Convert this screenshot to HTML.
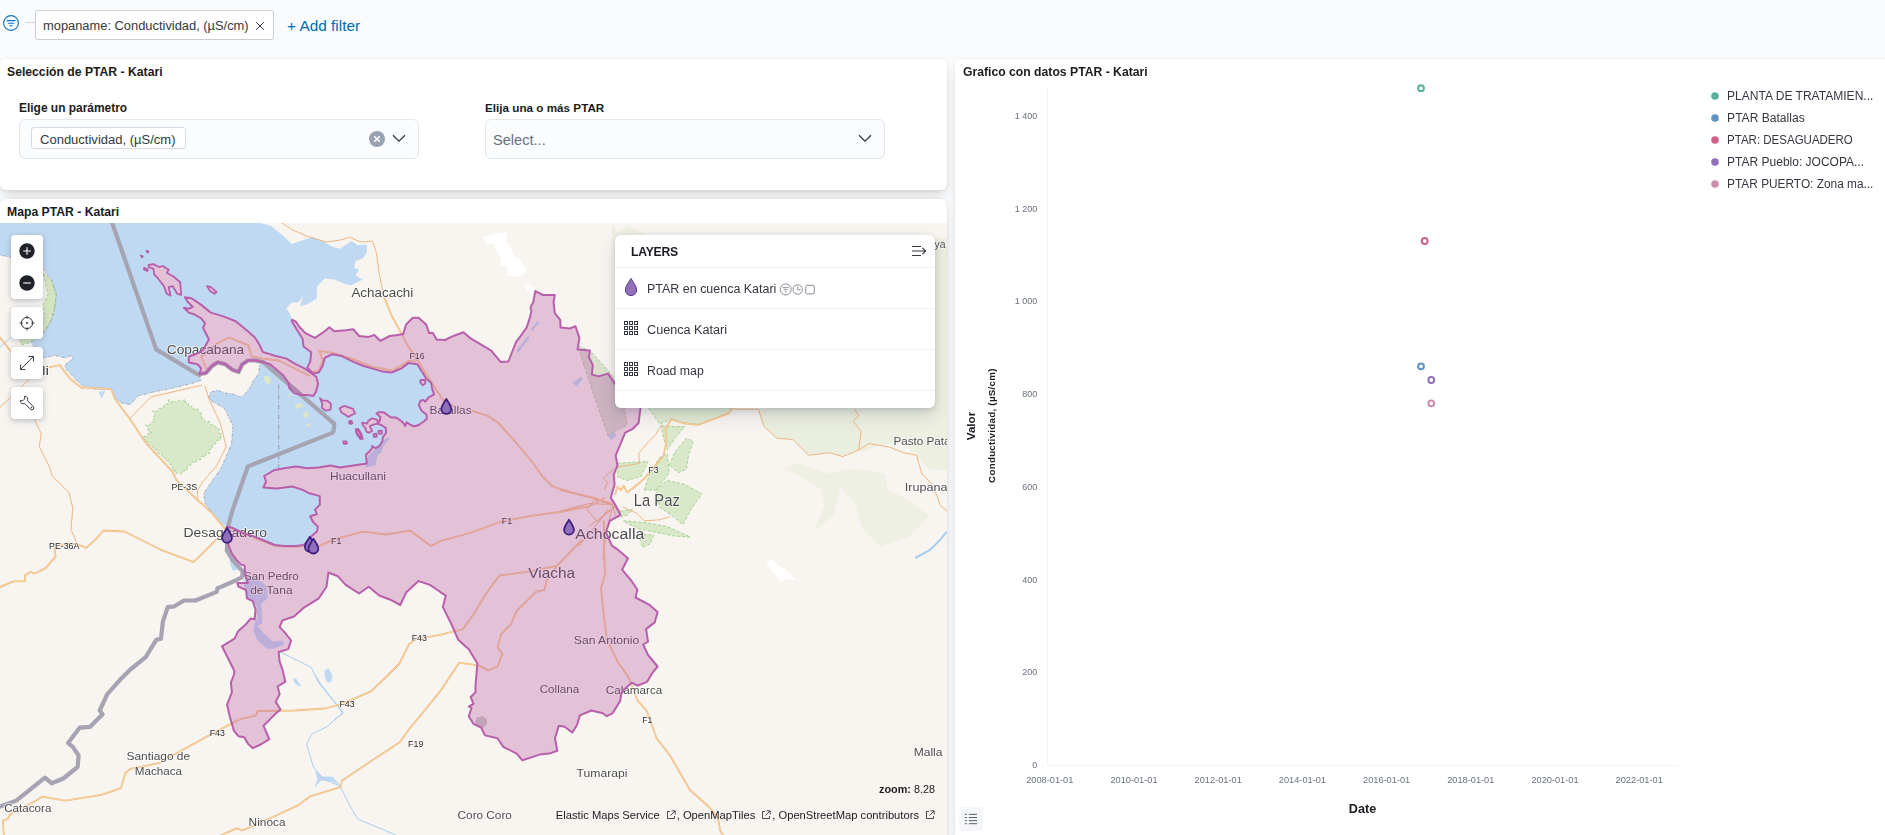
<!DOCTYPE html>
<html lang="es">
<head>
<meta charset="utf-8">
<title>Dashboard PTAR - Katari</title>
<style>
*{box-sizing:border-box;margin:0;padding:0}
html,body{width:1885px;height:835px;overflow:hidden;background:#fafbfd;font-family:"Liberation Sans",Arial,sans-serif;color:#343741}
.abs{position:absolute}
/* filter bar */
#fbar{position:absolute;left:0;top:0;width:1885px;height:56px}
#fpill{position:absolute;left:35px;top:10px;width:238.8px;height:30px;border:1px solid #c9cdd6;border-radius:3px;background:#fff;font-size:12.89px;line-height:30px;padding-left:7px;color:#343741;white-space:nowrap}
#addf{position:absolute;left:287px;top:17px;font-size:15.4px;color:#006bb4;white-space:nowrap;line-height:18px}
.panel{position:absolute;background:#fff;border-radius:6px;box-shadow:0 .9px 4px -1px rgba(0,0,0,.08),0 2.6px 8px -1px rgba(0,0,0,.06),0 5.7px 12px -1px rgba(0,0,0,.05),0 15px 15px -1px rgba(0,0,0,.04)}
.ptitle{position:absolute;left:7px;top:4px;font-size:12.2px;font-weight:bold;color:#1a1c21;white-space:nowrap;line-height:16px}
.flabel{position:absolute;font-size:12.4px;font-weight:bold;color:#1a1c21;white-space:nowrap;line-height:16px}
.field{position:absolute;width:400px;height:40px;background:#fbfcfd;border:1px solid #e3e6ef;border-radius:6px}
#map{position:absolute;left:0;top:24.5px;width:947px;height:612px;overflow:hidden;background:#f8f4f0}
.mbtn{position:absolute;left:11px;width:32px;background:#fff;border-radius:4px;box-shadow:0 1px 4px rgba(60,70,90,.25),0 3px 8px rgba(60,70,90,.12)}
#layers{position:absolute;left:615px;top:12px;width:320px;height:173px;background:#fff;border-radius:6px;box-shadow:0 2px 6px rgba(60,70,90,.2),0 8px 18px rgba(60,70,90,.15)}
#layers .row{position:absolute;left:0;width:320px;height:41px;border-top:1px solid #eef0f4}
#layers .row span{position:absolute;left:32px;top:13px;font-size:13.2px;color:#343741;line-height:16px;white-space:nowrap}
svg text{font-family:"Liberation Sans",Arial,sans-serif}
#lbl text,#shl text{font-family:"Liberation Sans",Arial,sans-serif}
</style>
</head>
<body>
<!-- FILTER BAR -->
<div id="fbar">
  <svg class="abs" style="left:2px;top:13.500px" width="18" height="18" viewBox="0 0 18 18"><circle cx="9" cy="9" r="7.4" fill="none" stroke="#0a72c4" stroke-width="1.1"/><path d="M5 6.6h8M6.3 9.2h5.4M7.8 11.8h2.4" stroke="#0a72c4" stroke-width="1.1" fill="none" stroke-linecap="round"/></svg>
  <div class="abs" style="left:25px;top:22px;width:10px;height:1px;background:#d3dae6"></div>
  <div id="fpill"><span id="fptxt">mopaname: Conductividad, (µS/cm)</span><svg class="abs" style="left:219.300px;top:10px" width="10" height="10" viewBox="0 0 10 10"><path d="M1.2 1.2l7.6 7.6M8.800 1.200l-7.600 7.600" stroke="#343741" stroke-width="1" fill="none"/></svg></div>
  <div id="addf">+ Add filter</div>
</div>

<!-- PANEL 1: controls -->
<div class="panel" style="left:0;top:58.7px;width:947px;height:131.6px">
  <div class="ptitle" style="left:7px;top:5.3px">Selección de PTAR - Katari</div>
  <div class="flabel" style="left:19px;top:41.3px;font-size:11.95px">Elige un parámetro</div>
  <div class="field" style="left:19px;top:60.3px">
    <div class="abs" style="left:11px;top:7px;width:155px;height:22px;border:1px solid #d3dae6;border-radius:3px;background:#fff;font-size:13.03px;line-height:24px;overflow:hidden;padding-left:8px;color:#343741;white-space:nowrap">Conductividad, (µS/cm)</div>
    <svg class="abs" style="left:349px;top:11px" width="16" height="16" viewBox="0 0 16 16"><circle cx="8" cy="8" r="8" fill="#98a2b3"/><path d="M5.2 5.2l5.6 5.6M10.8 5.2l-5.6 5.6" stroke="#fff" stroke-width="1.5" fill="none"/></svg>
    <svg class="abs" style="left:372px;top:14px" width="14" height="9" viewBox="0 0 14 9"><path d="M1 1.2l6 6 6-6" stroke="#343741" stroke-width="1.3" fill="none"/></svg>
  </div>
  <div class="flabel" style="left:485px;top:41.3px;font-size:11.7px">Elija una o más PTAR</div>
  <div class="field" style="left:485px;top:60.3px">
    <div class="abs" style="left:7px;top:11px;font-size:14.6px;color:#69707d;line-height:18px">Select...</div>
    <svg class="abs" style="left:372px;top:14px" width="14" height="9" viewBox="0 0 14 9"><path d="M1 1.2l6 6 6-6" stroke="#343741" stroke-width="1.3" fill="none"/></svg>
  </div>
</div>

<!-- PANEL 2: map -->
<div class="panel" style="left:0;top:198.5px;width:947px;height:646px;overflow:hidden">
  <div class="ptitle" style="left:7px;top:5.5px">Mapa PTAR - Katari</div>
  <div id="map" style="left:0">
    <svg id="mapsvg" class="abs" style="left:0;top:0" width="947" height="612" viewBox="0 223 947 612">
      <g fill="#e6ecd8" opacity=".75">
<path d="M611 223L618 232 628 226 640 232 655 238H947V470H930L912 452 905 440 880 446 861 452 850 438 820 440 800 410 770 408 700 408 660 408 640 404 628 392 622 370 618 300 614 250Z" opacity=".8"/>
<path d="M758.5 407.9 L854.7 407.9 L861.2 431.6 L858.6 450 L842.8 456.6 L829.6 452.7 L808.6 455.3 L792.8 439.5 L777 438.2 L763.8 426.3Z"/>
<path d="M783.5 468.5 L798 463.2 L829.6 473.7 L850.7 468.5 L884.9 473.7 L887.6 489.5 L903.4 497.5 L929.7 515.9 L908.6 537 L879.7 546.2 L871.8 537 L861.2 526.4 L856 505.4 L840.2 486.9 L833.6 515.9 L813.8 530.4 L824.4 505.4 L821.7 489.5 L800.7 476.4Z" opacity=".7"/>
</g>
<g fill="#ffffff">
<path d="M483.5 236.5 L495 233.6 L506.5 232.7 L506.5 243.2 L510.4 246.1 L514.2 255.7 L521.9 261.4 L526.6 271 L519.9 276.8 L507.5 275.8 L506.5 266.2 L499.8 265.3 L500.8 257.6 L495 248 L494.1 244.2 L485.4 243.2Z"/>
<path d="M523.8 284.4 L531.4 284.4 L535.3 291.1 L531.4 294 L526.6 290.2Z"/>
<path d="M766.4 562 L771.7 559.3 L779.6 565.9 L787.5 571.2 L796.7 580.4 L787.5 579.1 L780.9 581.7 L774.3 573.8 L770.4 569.9Z"/>
</g>
<path d="M0 222 L259.4 222 L259.4 222.9 L270.9 225.8 L282.4 235.3 L292 244 L305.4 239.2 L313.1 237.3 L322.7 241.1 L332.3 246.8 L339.9 248.8 L351.4 241.1 L357.2 244.9 L366.8 244.9 L366.8 252.6 L362.9 258.3 L355.3 261.2 L354.3 267.9 L359.1 269.8 L355.3 275.6 L362.9 279.4 L351.4 285.2 L345.7 284.2 L334.2 279.4 L324.6 278.5 L316.9 287.1 L316.9 298.6 L307.3 304.3 L299.7 306.3 L303.5 295.7 L297.8 302.4 L292 302.4 L286.3 308.2 L290.1 313.9 L292 319.7 L292 321.6 L297.8 331.2 L302.6 338.8 L303.5 346.5 L311.2 352.3 L310.2 361.9 L307.3 367.6 L313.1 373.4 L318.8 372.4 L322.7 365.7 L324.6 358 L332.3 354.2 L341.9 356.1 L353.4 361.9 L362.9 365.7 L372.5 368.6 L382.1 371.4 L391.5 372.5 L401.1 368.6 L408.8 362.9 L417.4 364.2 L421.2 370.5 L426 378.2 L431.2 382.9 L432.1 388.6 L434.1 394.4 L428.3 397.7 L425.4 401.6 L423.5 400.1 L420.6 400.6 L418.7 404.9 L421.6 410.7 L426.4 414.5 L426.9 418.8 L423.5 421.7 L418.7 425 L413.9 426.5 L410.1 424.6 L406.7 422.2 L405.3 426 L403.4 423.1 L399.6 419.8 L395.7 417.4 L390.9 417.4 L388.1 415.5 L384.2 412.6 L379.4 412.1 L376.5 413.5 L380.4 416.9 L379.9 420.7 L377.5 423.6 L381.3 425 L385.7 427.9 L386.1 432.7 L382.8 437.5 L382.3 441.3 L379.4 446.1 L375.6 448.1 L372.2 446.1 L372.2 448.1 L368.9 451.9 L366 454.8 L366.8 463.5 L353.4 465.5 L339.9 467.4 L330.4 465.5 L318.8 467.4 L307.3 468.3 L295.8 466.4 L284.3 468.3 L273.8 470.3 L264.2 476 L266.1 481.8 L263.3 487.5 L276.7 488.5 L292 486.5 L301.6 489.4 L309.3 493.3 L319.8 496.1 L319.8 504.8 L315 509.6 L316.9 514.3 L310.2 516.3 L313.1 522 L317.9 526.8 L316.9 531.6 L311.2 536.4 L310.2 539.3 L303.5 545 L295.8 546 L284.3 546 L274.8 545 L263.3 540.2 L253.7 536.4 L244.1 533.5 L232.6 527.8 L226.8 526.8 L219.2 522 L211.5 512.4 L204.8 502.8 L203.8 493.3 L211.5 481.8 L221.1 468.3 L226.8 454.9 L231.6 443.4 L232.6 430 L232.9 425.6 L224.3 408.3 L210.9 400.7 L208.9 397.9 L210.8 392.1 L217.5 390.2 L225.2 393.1 L232.8 394.1 L240.5 396.9 L244.3 395 L250.1 387.3 L253.9 379.7 L258.7 373.9 L259.7 364.3 L263.5 362.4 L270.2 364.3 L276.9 370.1 L283.6 375.8 L288.4 382.6 L289.4 388.3 L294.2 393.1 L300.9 395 L307.6 395 L313.4 396 L316.2 391.2 L318.1 383.5 L316.2 376.8 L305.7 369.1 L294.2 363.4 L286.5 358.6 L275 355.7 L262.6 351.9 L259.7 345.2 L254.9 337.5 L247.2 330.8 L235.7 321.2 L223.3 316.4 L210.8 312.6 L201.2 304.9 L191.6 298.2 L184.9 297.3 L187.8 302 L192.6 306.8 L188.8 308.8 L184 307.8 L188.8 312.6 L194.5 314.5 L201.2 318.3 L205 323.1 L203.1 327.9 L206 333.7 L208.9 339.4 L203.1 350 L196.4 353.8 L188.8 356.7 L188.8 362.4 L197.4 364.3 L201.2 368.2 L199.3 374.3 L201.3 380.5 L191.7 383.4 L172.5 388.2 L153.4 392 L138 395.9 L130.4 404.5 L122.7 403.5 L115 398.8 L111.2 389.2 L95.8 389.2 L84.3 387.3 L76.7 380.5 L67.1 370 L64.7 366.3 L67.1 362.7 L73.1 359.1 L71.9 355.5 L64.7 357.9 L55.1 355.5 L43.1 357.9 L35.9 349.6 L31.1 342.4 L45.5 330.4 L51.5 319.6 L55.1 306.4 L56.3 294.5 L51.5 280.1 L43.1 269.3 L10.8 257.3 L0 254.9 L0 222Z" fill="#bfd9f2"/>
<g fill="#f8f4f0">
<path d="M148.6 265 L153.4 264.1 L159.1 267 L162.9 266 L168.7 269.8 L166.8 272.7 L173.5 276.5 L180.2 282.3 L181.2 294.8 L177.3 293.8 L172.5 286.1 L168.7 287.1 L170.6 295.7 L166.8 293.8 L163.9 286.1 L157.2 277.5 L154.3 274.6 L153.4 268.9 L148.6 267Z"/>
<path d="M207 286.1 L210.9 287.1 L216.6 291.9 L214.7 293.8 L209.9 290.9Z"/>
<path d="M140.9 255.5 L142.8 256.4 L141.9 257.4Z"/>
<path d="M146.6 250.7 L148.6 251.6 L147.2 252.6Z"/>
<path d="M144.2 267.9 L148 269.5 L147.2 271 L143.8 269.1Z"/>
<path d="M320 398.2 L322.9 400.6 L327.2 400.6 L331 404 L330.5 409.7 L325.8 410.7 L321.9 407.8 L322.4 404Z"/>
<path d="M339.6 408.3 L344.4 405.9 L353.1 408.8 L355 413.5 L351.6 415 L348.3 416.9 L344.9 414.5 L341.6 412.6Z"/>
<path d="M349.5 421.2 L351.6 421 L352.4 423.1 L350.5 423.9Z"/>
<path d="M355.9 429.4 L358.3 428.9 L361.2 433.7 L362.7 438.9 L360.3 437.5 L356.9 433.2Z"/>
<path d="M343.2 441.3 L346.4 441.3 L347 443.3 L344 444Z"/>
<path d="M373.5 434.2 L376.5 433.7 L376.7 436.5 L373.9 437Z"/>
<path d="M378.5 430.8 L381.8 430.6 L382.1 433.5 L378.9 433.7Z"/>
<path d="M420.6 380 L425.4 380 L425 383.8 L422.6 385.3 L420.2 382.4Z"/>
<path d="M362.2 422.7 L367 423.6 L368.4 420.7 L372.2 418.3 L377.5 419.8 L377.5 423.6 L373.7 424.6 L369.8 426 L372.2 430.8 L369.4 432.7 L366.5 431.8 L365 427.4 L362.7 425Z"/>
<path d="M349.8 420.9 L351.7 421.9 L350.7 423.8 L348.8 422.8Z"/>
<path d="M355.9 429.1 L359.4 431.4 L362.2 438.1 L360.3 439.1 L356.5 433.4Z"/>
</g>
<g fill="#bfd9f2">
<path d="M324.6 670.2 L328.4 668.3 L332.3 675 L331.3 681.7 L327.5 682.7 L324.6 676.9Z"/>
<path d="M293 678.8 L295.8 677.9 L301.6 686.5 L297.8 685.6 L294.9 683.6Z"/>
<path d="M315.3 770.8 L322.9 776.6 L332.5 776.6 L340.2 785.2 L332.5 781.4 L321 780.4 L314.3 788.1 L317.2 779.5Z"/>
<path d="M98.7 392 L105.4 391.1 L101.6 398.8Z"/>
<path d="M229.1 556.4 L232.9 558.3 L237.7 569.8 L232.9 570.8 L230 564.1Z"/>
</g>
<g fill="none" stroke="#a8cdf0" stroke-width="1">
<path d="M280.5 652 L311.2 667.3 L318.8 682.7 L334.2 701.9 L342.8 713.4 L334.2 720.1"/>
<path d="M315.3 675 L321 684.6 L343.1 712.4 L326.8 726.8 L311.4 734.4 L306.6 744 L313.4 767 L322.9 778.5 L340.2 786.2 L349.8 805.4 L357.4 818.8 L395.8 835.1"/>
<path d="M915.2 558 L929.7 550.1 L940.3 539.6 L946.8 531.7" stroke-width="2"/>
<path d="M0 347 L10 338 22 330" />
</g>
<g fill="#dde9c4">
<path d="M263.5 376.8 L268.3 375.8 L271.2 381.6 L267.3 384.5 L264.5 380.6Z"/>
<path d="M294.2 404.6 L301.9 402.7 L302.8 406.5 L297.1 408.8Z"/>
<path d="M302.8 413.2 L307.6 411.3 L308.6 416.1 L304.7 418Z"/>
<path d="M305.7 424.7 L311.1 422.8 L309.5 427.2Z"/>
<path d="M287.5 393.1 L291.3 395 L289.4 396.9Z"/>
</g>
<g fill="#bfd9f2">
<path d="M243.1 574.4 L257.5 578.2 L267.1 586.8 L267.5 598.3 L261.3 604.1 L262.3 623.3 L257.5 626.1 L263.3 632.8 L272.8 641.5 L282.4 640.5 L284 644.3 L274.8 648.6 L267.1 649.1 L257.5 640.5 L253.3 630.9 L254.6 623.3 L257.5 617.5 L256.5 606 L251.8 600.3 L247 596.4 L244.1 586.8Z"/>
<path d="M572.7 383 L580.3 376.9 L583.2 378.2 L576.5 386.8Z"/>
<path d="M608.1 435.7 L614.8 431.9 L616.2 435.7 L611 440.5Z"/>
<path d="M530.5 329.5 L538.1 320.8 L539.1 323.1 L532.4 330.8Z"/>
<path d="M516.1 350.6 L528.6 335.2 L529.5 338.1 L518 353.1Z"/>
<path d="M383.3 440.4 L388.5 437 L390 438.5 L386.1 442.3 L383.3 446.1 L381.3 452.8 L377.5 454.8 L373.7 460 L369.8 460 L372.2 452.8 L377.5 449 L381.3 445.2Z"/>
<path d="M368.7 454.9 L384 439.6 L389.8 437.7 L378.3 453 L375.4 465.5 L364.9 467.4Z"/>
<path d="M607.9 435.5 L613.7 432.2 L616 434.9 L611.4 440.3Z"/>
</g>
<path d="M143.4 436.2 L146.7 436.5 L148.4 433.5 L152.1 432.8 L148.4 431.6 L148 427.9 L145.4 424.9 L149.3 425.2 L151.7 422.1 L155.9 421.7 L152.9 418.9 L154.8 415.3 L152.8 410.7 L156.9 411.6 L159.2 408.3 L163.3 408.6 L163.7 404.9 L167.6 403.8 L169 399.4 L171 402.2 L174.2 400.6 L176.6 403.1 L178.4 400.2 L181.8 401.4 L184.9 399.1 L185.2 402.2 L188.5 403.2 L188.5 407.1 L192.1 406.2 L193.7 409.7 L197.4 408.6 L198.5 411.6 L201.7 413.6 L201.1 417.3 L203.8 418.7 L205.4 422.2 L209.4 421.4 L211 424.9 L214.4 425.2 L216.1 427.8 L219.4 429.1 L218.4 432.6 L221.5 434.1 L221 436.6 L220.1 440 L216.6 440.4 L215.7 443.7 L212.1 444.4 L212.7 448 L209.3 449.4 L209.7 453.6 L206 453.1 L205.2 456.9 L201.4 456.1 L200.5 459.8 L197.2 459.6 L195.6 462.8 L191.9 461.7 L191.2 464.9 L187.2 466 L187.1 469.9 L183.9 471 L181.9 473.8 L178.7 472.1 L175.5 474 L175.4 470.8 L172.1 469.6 L173 465.7 L170 464.5 L169.3 461.3 L165.9 460.9 L165.2 457.8 L162.1 457 L161.7 453.7 L157.9 453.6 L157.5 450.2 L154.5 449.8 L152.7 446.3 L148.3 445.7 L148.1 441.8 L144.4 440.7Z" fill="#d8e8c8" stroke="#9ccf8a" stroke-width=".9" stroke-dasharray="3 2"/>
<path d="M43.1 272.9 L51.5 280.1 L56.3 294.5 L55.1 306.4 L51.5 319.6 L45.5 330.4 L31.1 342.4 L21.6 344.8 L19.2 337.6 L35.9 328 L44.3 316 L43.1 304 L47.9 294.5Z" fill="#d4e3c0" stroke="#9ccf8a" stroke-width=".9" stroke-dasharray="3 2"/>
<path d="M617.5 463.3 L648.2 461.3 L644.3 469 L640.5 476.7 L627.1 480.5 L617.5 476.7Z" fill="#d8e8c8" stroke="#9ccf8a" stroke-width=".9" stroke-dasharray="3 2"/>
<path d="M661.6 425.9 L684.6 426.8 L675 438.3 L667.3 449.8 L663.5 438.3Z" fill="#d8e8c8" stroke="#9ccf8a" stroke-width=".9" stroke-dasharray="3 2"/>
<path d="M669.3 465.2 L675 451.8 L686.5 438.3 L693.2 441.2 L688.4 455.6 L686.5 469 L678.8 472.8Z" fill="#d8e8c8" stroke="#9ccf8a" stroke-width=".9" stroke-dasharray="3 2"/>
<path d="M644.3 490.1 L650.1 472.8 L659.7 457.5 L667.3 453.7 L669.3 472.8 L655.8 490.1Z" fill="#d8e8c8" stroke="#9ccf8a" stroke-width=".9" stroke-dasharray="3 2"/>
<path d="M655.8 490.1 L667.3 480.5 L684.6 484.3 L701.9 493.9 L692.3 507.3 L682.7 524.6 L671.2 515 L659.7 507.3Z" fill="#d8e8c8" stroke="#9ccf8a" stroke-width=".9" stroke-dasharray="3 2"/>
<path d="M623.3 520.8 L646.3 522.7 L667.3 526.5 L690.4 537.1 L675 536.1 L655.8 532.3 L636.7 528.4Z" fill="#d8e8c8" stroke="#9ccf8a" stroke-width=".9" stroke-dasharray="3 2"/>
<path d="M638.6 534.2 L653.9 535.1 L650.1 543.8 L642.4 547.6Z" fill="#d8e8c8" stroke="#9ccf8a" stroke-width=".9" stroke-dasharray="3 2"/>
<path d="M620.4 511.2 L632.8 509.3 L627.1 515 L621.3 516.9Z" fill="#d8e8c8" stroke="#9ccf8a" stroke-width=".9" stroke-dasharray="3 2"/>
<path d="M648.2 407.7 L732.5 407.7 L728.7 413.4 L713.4 419.2 L698 424.9 L682.7 423 L671.2 419.2 L659.7 424Z" fill="#dfe9d2" stroke="#9ccf8a" stroke-width=".9" stroke-dasharray="3 2"/>
<path d="M578.4 345.8 L590.9 351.5 L606 368 L620 385 L623.3 400 L627.1 424.9 L607.9 435.5 L595.5 400 L582.2 360Z" fill="#dadfce" stroke="#9fc090" stroke-width=".8" stroke-dasharray="3 2"/>
<circle cx="481.2" cy="722" r="5.5" fill="#cfc8c4" stroke="#a8c898" stroke-width=".8" stroke-dasharray="3 2"/>
<path d="M201.3 380.5 L191.7 383.4 L172.5 388.2 L153.4 392 L138 395.9 L130.4 404.5 L122.7 403.5 L115 398.8 L111.2 389.2 L95.8 389.2 L84.3 387.3 L76.7 380.5 L67.1 370 L64.7 366.3 L67.1 362.7 L73.1 359.1 L71.9 355.5 L64.7 357.9 L55.1 355.5 L43.1 357.9 L35.9 349.6 L31.1 342.4 L45.5 330.4 L51.5 319.6 L55.1 306.4 L56.3 294.5 L51.5 280.1 L43.1 269.3 L10.8 257.3 L0 254.9" fill="none" stroke="#8e8e9e" stroke-width=".9" stroke-dasharray="3 1.5 1 1.5" opacity=".75"/>
<path d="M219.2 522 L211.5 512.4 L204.8 502.8 L203.8 493.3 L211.5 481.8 L221.1 468.3 L226.8 454.9 L231.6 443.4 L232.6 430 L232.9 425.6 L224.3 408.3 L210.9 400.7 L208.9 397.9 L210.8 392.1 L217.5 390.2 L225.2 393.1 L232.8 394.1 L240.5 396.9 L244.3 395 L250.1 387.3 L253.9 379.7 L258.7 373.9 L259.7 364.3" fill="none" stroke="#8e8e9e" stroke-width=".9" stroke-dasharray="3 1.5 1 1.5" opacity=".75"/>
<path d="M278.8 384.5V470" stroke="#9a97a8" stroke-width="1" stroke-dasharray="5 2 1 2" fill="none"/>
<g fill="none" stroke-linejoin="round" stroke-linecap="round">
<path d="M281.5 222.9 L292 229.6 L307.3 236.3 L326.5 242 L339.9 240.1 L349.5 237.3 L361 242 L372.5 241.1 L376.4 252.6 L379.2 273.7 L384 296.7" stroke="#eeb582" stroke-width="1"/>
<path d="M130.4 417.9 L151.4 396.8 L201.3 385.3" stroke="#eeb582" stroke-width="1"/>
<path d="M205.1 386.3 L208.9 398.8 L220.4 423.7 L226.2 446.7 L216.6 465.8 L203.2 481.2 L197.4 490.8 L197.4 500.4" stroke="#eeb582" stroke-width="1"/>
<path d="M28.8 379.6 L23 385.3 L0 407.4" stroke="#eeb582" stroke-width="1"/>
<path d="M34.5 419.8 L41.2 433.3 L39.3 446.7 L49.8 467.8 L51.8 475.4 L69 492.7 L72.8 508 L70.9 530.1 L71.9 531.5 L76.7 543" stroke="#eeb582" stroke-width="1"/>
<path d="M733.5 409.2 L758.5 409.2 L763.8 426.3 L777 438.2 L792.8 439.5 L808.6 455.3 L829.6 452.7 L842.8 456.6 L858.6 450 L861.2 431.6 L853.3 421.1 L858.6 415.8 L854.7 409.2" stroke="#eeb582" stroke-width="1"/>
<path d="M858.6 450 L869.1 443.5 L890.2 447.4 L903.4 452.7 L916.6 455.3 L921.8 473.7 L932.4 484.3 L937.6 497.5 L940.3 505.4 L946.8 510.6" stroke="#eeb582" stroke-width="1"/>
<path d="M639.6 463.3 L638.6 453.7 L646.3 444.1 L655.8 434.5 L661.6 424.9" stroke="#eeb582" stroke-width="1"/>
<path d="M617.5 467.1 L639.6 463.3" stroke="#eeb582" stroke-width="1"/>
<path d="M623.3 507.3 L636.7 513.1 L644.3 520.8 L659.7 519.8 L669.3 516.9" stroke="#eeb582" stroke-width="1"/>
<path d="M560 490.1 L590.7 497.8 L611.8 504.5 L615.6 515" stroke="#eeb582" stroke-width="1"/>
<path d="M560 511.2 L588.8 503.5 L611.8 504.5" stroke="#eeb582" stroke-width="1"/>
<path d="M586.8 509.3 L594.5 499.7 L611.8 504.5" stroke="#eeb582" stroke-width="1"/>
<path d="M586.8 509.3 L598.3 522.7 L607.9 509.3" stroke="#eeb582" stroke-width="1"/>
<path d="M579.2 545.7 L606 513.1 L613.7 507.3" stroke="#eeb582" stroke-width="1"/>
<path d="M588.8 526.5 L609.8 511.2" stroke="#eeb582" stroke-width="1"/>
<path d="M603.1 560.1 L606 532.3 L611.8 509.3" stroke="#eeb582" stroke-width="1"/>
<path d="M604.1 490.1 L607.9 482.4 L603.1 478.6 L613.7 469" stroke="#eeb582" stroke-width="1"/>
<path d="M0 337.6 L9.6 349.6 L26.3 368.7 L43.1 368.7 L59.9 365.1 L69.5 378.3 L81.4 387.9 L84.3 387.3 L111.2 389.2 L115 398.8 L130.4 419.8 L145.7 442.8 L172.5 471.6 L176.4 480.2 L191.7 494.6 L210.9 511.9 L226.2 530.1" stroke="#eeb47a" stroke-width="1.8"/>
<path d="M0 587.1 L13.4 581.3 L24.9 581.3 L24.9 575.6 L30.7 571.8 L34.5 573.7 L46 567.9 L55.6 556.4 L54.6 548.8 L59.4 544.9 L76.7 544 L86.3 547.8 L95.8 539.2 L103.5 530.5 L124.6 531.5 L162.9 550.7 L193.6 562.2 L214.7 541.1 L226.2 529.6" stroke="#eeb47a" stroke-width="1.8"/>
<path d="M3.8 835.1 L2.9 820.7 L7.7 818.8 L11.5 813 L34.5 801.5 L42.2 796.7 L65.2 800.6 L101.6 794.8 L120.8 788.1 L125.6 772.8 L130.4 768.9 L159.1 763.2 L172.5 755.5 L210.9 734.4 L240 719.1 L236.7 720 L255.8 715.3 L257.8 711 L294.2 710.5 L324.9 708.5 L342.1 703.8 L370.9 691.3 L388.1 675 L399.4 663.5 L408.9 644.3 L416.6 638.6 L430 636.7 L440 634.8 L440 634.9" stroke="#eeb47a" stroke-width="1.8"/>
<path d="M221.3 835.1 L236.7 828.4 L242.4 830.3 L271.2 817.8 L298 805.4 L309.5 796.7 L340.2 787.1 L342.1 780.4 L370.9 761.3 L400 742.1 L410 728 L425 710 L440 691.4" stroke="#eeb47a" stroke-width="1.8"/>
<path d="M384 296.7 L391.7 315.8 L401.3 333.1 L407 344.6 L416.6 358 L424.3 371.4 L430 380.1 L426 373.4 L435.6 388.8 L443.3 400.3 L456.7 407.9 L472 410.8 L487.3 415.6 L498.8 423.3 L514.2 440.5 L533.4 463.5 L542.9 476.9 L552.5 486.5 L571.7 492.3 L590.9 497.1 L610 502.8 L620 511.4" stroke="#eeb47a" stroke-width="1.8"/>
<path d="M226.8 527.8 L244.1 534.5 L263.3 541.2 L274.8 546 L295.8 546.9 L311.2 545 L318.8 546 L334.2 539.3 L362.9 531.6 L385.9 534.5 L409.9 530.6 L431 546 L440 541.2 L470 533 L500 522 L530 516 L560 512 L590 506 L604 498" stroke="#eeb47a" stroke-width="1.8"/>
<path d="M603.9 520.8 L603.9 540 L604.9 574.5 L601 587.9 L603.9 616.7 L606.8 639.7 L618.3 662.7 L627.9 676.1 L631.7 685.7 L637.4 700.1 L647 711.4 L656.6 738.3 L670 755.5 L680 772.8 L690 790 L708 806 L718 818 L720 830 L726 840" stroke="#eeb47a" stroke-width="1.8"/>
<path d="M581.9 540 L556.9 565.9 L546.4 581.2 L544.5 589.8 L535.8 591.8 L524.3 603.3 L516.7 610.9 L510.9 624.3 L501.3 633.9 L497.5 647.3 L502.3 654.1 L497.5 666.5 L487.9 670.4 L479.3 665.6 L459.2 662.7 L440 691.4" stroke="#eeb47a" stroke-width="1.8"/>
<path d="M556.9 565.9 L528.2 571.6 L499.4 575.5 L486 593.7 L474.5 612.8 L463 629.1 L440 634.9" stroke="#eeb47a" stroke-width="1.8"/>
<path d="M615.2 494.3 L617.5 486.6 L621 490.1 L623.6 485.5 L627.1 492.4 L632.8 488.2 L644.3 478.6 L655.8 465.2 L663.5 455.6 L666.4 442.2 L665.4 428.8 L671.2 419.2 L682.7 423 L698 424.9 L713.4 419.2 L728.7 413.4 L732.5 407.7" stroke="#eeb47a" stroke-width="1.8"/>
<path d="M201.2 356.7 L206 368.2 L201.2 356.7 L217.5 343.3 L229 337.5 L238.6 341.3 L248.2 345.2 L252 356.7 L263.5 358.6 L278.8 360.5 L294.2 368.2 L309.5 375.8" stroke="#eeb47a" stroke-width="1.8"/>
<path d="M313.4 372 L319.1 370.1 L322.9 360.5 L319.1 350.9 L332.5 352.8 L351.7 358.6 L370.9 366.3 L390 370.1 L400 369.1 L391.5 370.5 L401.1 365.8 L408.8 361 L418.3 360" stroke="#eeb47a" stroke-width="1.8"/>
<path d="M0 337.6 L9.6 349.6 L26.3 368.7 L43.1 368.7 L59.9 365.1 L69.5 378.3 L81.4 387.9 L84.3 387.3 L111.2 389.2 L115 398.8 L130.4 419.8 L145.7 442.8 L172.5 471.6 L176.4 480.2 L191.7 494.6 L210.9 511.9 L226.2 530.1" stroke="#fdebb8" stroke-width="0.6"/>
<path d="M0 587.1 L13.4 581.3 L24.9 581.3 L24.9 575.6 L30.7 571.8 L34.5 573.7 L46 567.9 L55.6 556.4 L54.6 548.8 L59.4 544.9 L76.7 544 L86.3 547.8 L95.8 539.2 L103.5 530.5 L124.6 531.5 L162.9 550.7 L193.6 562.2 L214.7 541.1 L226.2 529.6" stroke="#fdebb8" stroke-width="0.6"/>
<path d="M3.8 835.1 L2.9 820.7 L7.7 818.8 L11.5 813 L34.5 801.5 L42.2 796.7 L65.2 800.6 L101.6 794.8 L120.8 788.1 L125.6 772.8 L130.4 768.9 L159.1 763.2 L172.5 755.5 L210.9 734.4 L240 719.1 L236.7 720 L255.8 715.3 L257.8 711 L294.2 710.5 L324.9 708.5 L342.1 703.8 L370.9 691.3 L388.1 675 L399.4 663.5 L408.9 644.3 L416.6 638.6 L430 636.7 L440 634.8 L440 634.9" stroke="#fdebb8" stroke-width="0.6"/>
<path d="M221.3 835.1 L236.7 828.4 L242.4 830.3 L271.2 817.8 L298 805.4 L309.5 796.7 L340.2 787.1 L342.1 780.4 L370.9 761.3 L400 742.1 L410 728 L425 710 L440 691.4" stroke="#fdebb8" stroke-width="0.6"/>
<path d="M384 296.7 L391.7 315.8 L401.3 333.1 L407 344.6 L416.6 358 L424.3 371.4 L430 380.1 L426 373.4 L435.6 388.8 L443.3 400.3 L456.7 407.9 L472 410.8 L487.3 415.6 L498.8 423.3 L514.2 440.5 L533.4 463.5 L542.9 476.9 L552.5 486.5 L571.7 492.3 L590.9 497.1 L610 502.8 L620 511.4" stroke="#fdebb8" stroke-width="0.6"/>
<path d="M226.8 527.8 L244.1 534.5 L263.3 541.2 L274.8 546 L295.8 546.9 L311.2 545 L318.8 546 L334.2 539.3 L362.9 531.6 L385.9 534.5 L409.9 530.6 L431 546 L440 541.2 L470 533 L500 522 L530 516 L560 512 L590 506 L604 498" stroke="#fdebb8" stroke-width="0.6"/>
<path d="M603.9 520.8 L603.9 540 L604.9 574.5 L601 587.9 L603.9 616.7 L606.8 639.7 L618.3 662.7 L627.9 676.1 L631.7 685.7 L637.4 700.1 L647 711.4 L656.6 738.3 L670 755.5 L680 772.8 L690 790 L708 806 L718 818 L720 830 L726 840" stroke="#fdebb8" stroke-width="0.6"/>
<path d="M581.9 540 L556.9 565.9 L546.4 581.2 L544.5 589.8 L535.8 591.8 L524.3 603.3 L516.7 610.9 L510.9 624.3 L501.3 633.9 L497.5 647.3 L502.3 654.1 L497.5 666.5 L487.9 670.4 L479.3 665.6 L459.2 662.7 L440 691.4" stroke="#fdebb8" stroke-width="0.6"/>
<path d="M556.9 565.9 L528.2 571.6 L499.4 575.5 L486 593.7 L474.5 612.8 L463 629.1 L440 634.9" stroke="#fdebb8" stroke-width="0.6"/>
<path d="M615.2 494.3 L617.5 486.6 L621 490.1 L623.6 485.5 L627.1 492.4 L632.8 488.2 L644.3 478.6 L655.8 465.2 L663.5 455.6 L666.4 442.2 L665.4 428.8 L671.2 419.2 L682.7 423 L698 424.9 L713.4 419.2 L728.7 413.4 L732.5 407.7" stroke="#fdebb8" stroke-width="0.6"/>
<path d="M201.2 356.7 L206 368.2 L201.2 356.7 L217.5 343.3 L229 337.5 L238.6 341.3 L248.2 345.2 L252 356.7 L263.5 358.6 L278.8 360.5 L294.2 368.2 L309.5 375.8" stroke="#fdebb8" stroke-width="0.6"/>
<path d="M313.4 372 L319.1 370.1 L322.9 360.5 L319.1 350.9 L332.5 352.8 L351.7 358.6 L370.9 366.3 L390 370.1 L400 369.1 L391.5 370.5 L401.1 365.8 L408.8 361 L418.3 360" stroke="#fdebb8" stroke-width="0.6"/>
</g>
<path d="M111.5 221 L156.2 349.4 L199.3 375.3 L199.3 374.3 L206 373 L211.8 366.3 L217.5 362.4 L225.2 364.3 L232.8 370.1 L238.6 372 L242.4 364.3 L248.2 360.5 L255.8 360.5 L263.5 362.4 L334.4 423.8 L333.5 431.4 L332.3 432.9 L247.9 466.4 L232.6 510 L227.8 527.3 L227.3 542.6 L226.8 550.3 L232.6 559.9 L238.4 566.6 L242.7 571.4 L242.2 577.1 L234.5 581 L219.2 587.7 L217.6 588.1 L216.6 591.9 L195.5 600.5 L184 600.5 L174.4 606.3 L167.7 607.2 L162.9 621.6 L161 638.8 L156.2 639.8 L145.7 657.1 L130.4 669.5 L119.8 680.1 L107.3 694.2 L99.7 710.5 L102.6 714.3 L90.1 726.8 L79.6 727.7 L68.1 743.1 L72.8 746.9 L78.6 755.5 L77.6 767 L63.3 778.5 L51.8 783.3 L45 777.6 L16.3 800.6 L-1.9 807.3" fill="none" stroke="#a6a3b2" stroke-width="4.2" stroke-linejoin="round"/>
<g id="lbl" font-family="'DejaVu Sans','Liberation Sans',sans-serif" fill="#4a4a4a" stroke="#fff" stroke-opacity=".85" stroke-width="1.6" paint-order="stroke" text-anchor="start">
<text x="351.4" y="296.7" font-size="13.4" textLength="61.9" lengthAdjust="spacingAndGlyphs">Achacachi</text>
<text x="166.8" y="353.5" font-size="13.4" textLength="77.4" lengthAdjust="spacingAndGlyphs">Copacabana</text>
<text x="429.5" y="413.7" font-size="10.8" textLength="42.1" lengthAdjust="spacingAndGlyphs">Batallas</text>
<text x="330" y="479.8" font-size="10.8" textLength="56" lengthAdjust="spacingAndGlyphs">Huacullani</text>
<text x="633.8" y="506.4" font-size="17.4" textLength="46" lengthAdjust="spacingAndGlyphs">La Paz</text>
<text x="575.3" y="539" font-size="15.4" textLength="69" lengthAdjust="spacingAndGlyphs">Achocalla</text>
<text x="183.6" y="536.9" font-size="13.4" textLength="83.4" lengthAdjust="spacingAndGlyphs">Desaguadero</text>
<text x="528.2" y="578.3" font-size="15" textLength="46.9" lengthAdjust="spacingAndGlyphs">Viacha</text>
<text x="244" y="579.5" font-size="10.8" textLength="54.7" lengthAdjust="spacingAndGlyphs">San Pedro</text>
<text x="250.2" y="593.5" font-size="10.8" textLength="42.4" lengthAdjust="spacingAndGlyphs">de Tana</text>
<text x="573.8" y="643.5" font-size="10.8" textLength="65.5" lengthAdjust="spacingAndGlyphs">San Antonio</text>
<text x="539.7" y="693.3" font-size="10.8" textLength="39.6" lengthAdjust="spacingAndGlyphs">Collana</text>
<text x="605.8" y="693.8" font-size="10.8" textLength="56.5" lengthAdjust="spacingAndGlyphs">Calamarca</text>
<text x="576.5" y="776.6" font-size="10.8" textLength="51" lengthAdjust="spacingAndGlyphs">Tumarapi</text>
<text x="457.6" y="818.8" font-size="10.8" textLength="54.3" lengthAdjust="spacingAndGlyphs">Coro Coro</text>
<text x="248.6" y="825.5" font-size="10.8" textLength="36.9" lengthAdjust="spacingAndGlyphs">Ninoca</text>
<text x="126.5" y="760.3" font-size="10.8" textLength="63.6" lengthAdjust="spacingAndGlyphs">Santiago de</text>
<text x="134.8" y="774.7" font-size="10.8" textLength="47.3" lengthAdjust="spacingAndGlyphs">Machaca</text>
<text x="4.2" y="811.5" font-size="10.8" textLength="47.2" lengthAdjust="spacingAndGlyphs">Catacora</text>
<text x="913.7" y="755.7" font-size="10.8" textLength="28.8" lengthAdjust="spacingAndGlyphs">Malla</text>
<text x="893.4" y="444.8" font-size="10.8" textLength="57.2" lengthAdjust="spacingAndGlyphs">Pasto Pata</text>
<text x="904.7" y="490.9" font-size="10.8" textLength="42.8" lengthAdjust="spacingAndGlyphs">Irupana</text>
<text x="25.5" y="374.7" font-size="13.4" textLength="23.6" lengthAdjust="spacingAndGlyphs">Juli</text>
<text x="934.5" y="248" font-size="10.8" textLength="11" lengthAdjust="spacingAndGlyphs">ya</text>
</g>
<g font-family="'DejaVu Sans','Liberation Sans',sans-serif" font-size="8.8" fill="#262626" stroke="#fff" stroke-opacity=".75" stroke-width="1.2" paint-order="stroke" text-anchor="middle">
<text x="417" y="359.3">F16</text>
<text x="184.3" y="490">PE-3S</text>
<text x="64.2" y="548.8">PE-36A</text>
<text x="336.2" y="543.8">F1</text>
<text x="507" y="523.5">F1</text>
<text x="653.5" y="472.7">F3</text>
<text x="419.3" y="641">F43</text>
<text x="347" y="707.4">F43</text>
<text x="217.3" y="736">F43</text>
<text x="415.7" y="746.5">F19</text>
<text x="647.3" y="723">F1</text>
</g>
<g fill="#b250a3" fill-opacity=".3" stroke="#b85fac" stroke-width="2" stroke-linejoin="round">
<path d="M292 319.7 L295.8 321.6 L299.7 327.3 L305.4 333.1 L315 337.9 L324.6 331.2 L329.4 327.3 L334.2 331.2 L345.7 330.2 L353.4 329.3 L359.1 336 L368.7 336.9 L374.4 335 L380.2 340.8 L389.8 336 L397.4 335 L403.2 334.1 L406.1 324.5 L412.8 317.8 L418.5 317.8 L426.2 324.5 L429.1 333.1 L432.9 333.1 L436.7 339.8 L440 339.8 L445.2 340 L452.8 336.2 L463.4 332.3 L470.1 338.1 L481.6 344.8 L491.2 350.6 L500.8 362.1 L508.4 361.5 L512.3 351.5 L516.1 341.9 L521.9 334.3 L526.6 327.6 L529.5 318.9 L531.4 311.3 L530.5 307.4 L533.4 301.7 L535.3 291.1 L542.9 295 L554.8 295 L553.5 301.7 L554.8 313.2 L560.2 319.9 L560.6 327.6 L569.8 328.5 L575.5 326.2 L579.4 338.1 L577.4 349.6 L589.9 350.6 L588.9 357.3 L592.8 364.9 L591.8 374.5 L598.5 376.4 L608.1 373.6 L615.8 385.1 L620 390.7 L628 395 L636 401 L641 405 L640.5 407.7 L638.6 423 L632.8 428.8 L625.2 432.6 L621.3 442.2 L615.6 455.6 L617.5 465.2 L613.7 474.8 L614.6 484.3 L610.8 497.8 L615.6 505.4 L620.4 515 L609.8 520.8 L606 532.3 L611.8 545.7 L616.4 548.6 L627.9 558.2 L622.1 569.7 L631.7 581.2 L637.4 589.8 L635.5 597.5 L649.9 605.2 L657.6 611.9 L654.7 622.4 L646.1 629.1 L648 641.6 L643.2 644.5 L648 655 L657.6 666.5 L652.8 672.3 L647 681.9 L637.4 685.7 L631.7 682.7 L624 689.4 L621.2 694.2 L620.2 700.9 L612.5 713.3 L606.8 716.2 L602.9 713.3 L591.4 710.5 L579.9 715.3 L577.1 724.8 L572.3 732.5 L564.6 726.8 L558.8 725.8 L555 738.3 L557.3 750.7 L549.3 753.6 L539.7 754.6 L522.4 760.3 L516.7 753.6 L503.3 746.9 L497.5 738.3 L485 735.4 L481.2 727.7 L473.5 723.9 L468.8 716.2 L471.6 707.6 L468.8 706.6 L473.5 703.8 L470.7 697 L475.5 692.3 L475.5 685.7 L477.4 663.6 L468.8 649.3 L458.2 639.7 L451.5 624.3 L442.9 607.1 L445.8 595.6 L440 591.8 L430 584.9 L418.5 581.1 L406.1 592.6 L400.3 605 L391.7 600.3 L379.2 595.5 L368.7 586.8 L359.1 593.5 L345.7 584.9 L338 576.3 L328.4 572.5 L326.5 586.8 L318.8 598.3 L303.5 607.9 L293.9 616.5 L282.4 620.4 L279.6 627.1 L284.3 631.9 L291.1 640.5 L288.2 649.1 L278.6 652 L279.6 661.6 L282.4 669.3 L285.3 681.7 L277.6 686.5 L279.6 694.2 L275.7 701.9 L280.5 709.5 L276 713.3 L270.2 719.1 L263.5 725.8 L266.4 732.5 L269.3 739.2 L261.6 744 L253 748.2 L248.2 744 L244.3 737.3 L238.6 736.3 L233.8 730.6 L230 717.2 L227.1 704.7 L231.9 692.3 L230.9 682.7 L233.8 675 L234.5 671.2 L228.8 659.7 L222 646.3 L234.5 638.6 L238.3 630.9 L246 624.2 L250.8 618.5 L254.6 619.4 L255.6 609.8 L252.7 601.2 L247 598.3 L246 590 L238.4 586.7 L237.4 582.9 L247.9 582.9 L245.1 575.2 L244.6 565.6 L241.2 564.6 L236.4 559.9 L231.6 553.1 L227.8 543.6 L226.8 526.8 L232.6 527.8 L244.1 533.5 L253.7 536.4 L263.3 540.2 L274.8 545 L284.3 546 L295.8 546 L303.5 545 L310.2 539.3 L311.2 536.4 L316.9 531.6 L317.9 526.8 L313.1 522 L310.2 516.3 L316.9 514.3 L315 509.6 L319.8 504.8 L319.8 496.1 L309.3 493.3 L301.6 489.4 L292 486.5 L276.7 488.5 L263.3 487.5 L266.1 481.8 L264.2 476 L273.8 470.3 L284.3 468.3 L295.8 466.4 L307.3 468.3 L318.8 467.4 L330.4 465.5 L339.9 467.4 L353.4 465.5 L366.8 463.5 L366 454.8 L368.9 451.9 L372.2 448.1 L372.2 446.1 L375.6 448.1 L379.4 446.1 L382.3 441.3 L382.8 437.5 L386.1 432.7 L385.7 427.9 L381.3 425 L377.5 423.6 L379.9 420.7 L380.4 416.9 L376.5 413.5 L379.4 412.1 L384.2 412.6 L388.1 415.5 L390.9 417.4 L395.7 417.4 L399.6 419.8 L403.4 423.1 L405.3 426 L406.7 422.2 L410.1 424.6 L413.9 426.5 L418.7 425 L423.5 421.7 L426.9 418.8 L426.4 414.5 L421.6 410.7 L418.7 404.9 L420.6 400.6 L423.5 400.1 L425.4 401.6 L428.3 397.7 L434.1 394.4 L432.1 388.6 L431.2 382.9 L426 378.2 L421.2 370.5 L417.4 364.2 L408.8 362.9 L401.1 368.6 L391.5 372.5 L382.1 371.4 L372.5 368.6 L362.9 365.7 L353.4 361.9 L341.9 356.1 L332.3 354.2 L324.6 358 L322.7 365.7 L318.8 372.4 L313.1 373.4 L307.3 367.6 L310.2 361.9 L311.2 352.3 L303.5 346.5 L302.6 338.8 L297.8 331.2 L292 321.6Z"/>
<path d="M184.9 297.3 L191.6 298.2 L201.2 304.9 L210.8 312.6 L223.3 316.4 L235.7 321.2 L247.2 330.8 L254.9 337.5 L259.7 345.2 L262.6 351.9 L275 355.7 L286.5 358.6 L294.2 363.4 L305.7 369.1 L316.2 376.8 L318.1 383.5 L316.2 391.2 L313.4 396 L307.6 395 L300.9 395 L294.2 393.1 L289.4 388.3 L288.4 382.6 L283.6 375.8 L276.9 370.1 L270.2 364.3 L263.5 362.4 L255.8 360.5 L248.2 360.5 L242.4 364.3 L238.6 372 L232.8 370.1 L225.2 364.3 L217.5 362.4 L211.8 366.3 L206 373 L199.3 374.3 L201.2 368.2 L197.4 364.3 L188.8 362.4 L188.8 356.7 L196.4 353.8 L203.1 350 L208.9 339.4 L206 333.7 L203.1 327.9 L205 323.1 L201.2 318.3 L194.5 314.5 L188.8 312.6 L184 307.8 L188.8 308.8 L192.6 306.8 L187.8 302Z"/>
<path d="M148.6 265 L153.4 264.1 L159.1 267 L162.9 266 L168.7 269.8 L166.8 272.7 L173.5 276.5 L180.2 282.3 L181.2 294.8 L177.3 293.8 L172.5 286.1 L168.7 287.1 L170.6 295.7 L166.8 293.8 L163.9 286.1 L157.2 277.5 L154.3 274.6 L153.4 268.9 L148.6 267Z" stroke-width="1.8"/>
<path d="M207 286.1 L210.9 287.1 L216.6 291.9 L214.7 293.8 L209.9 290.9Z" stroke-width="1.8"/>
<path d="M140.9 255.5 L142.8 256.4 L141.9 257.4Z" stroke-width="1.8"/>
<path d="M146.6 250.7 L148.6 251.6 L147.2 252.6Z" stroke-width="1.8"/>
<path d="M144.2 267.9 L148 269.5 L147.2 271 L143.8 269.1Z" stroke-width="1.8"/>
<path d="M320 398.2 L322.9 400.6 L327.2 400.6 L331 404 L330.5 409.7 L325.8 410.7 L321.9 407.8 L322.4 404Z" stroke-width="1.8"/>
<path d="M339.6 408.3 L344.4 405.9 L353.1 408.8 L355 413.5 L351.6 415 L348.3 416.9 L344.9 414.5 L341.6 412.6Z" stroke-width="1.8"/>
<path d="M349.5 421.2 L351.6 421 L352.4 423.1 L350.5 423.9Z" stroke-width="1.8"/>
<path d="M355.9 429.4 L358.3 428.9 L361.2 433.7 L362.7 438.9 L360.3 437.5 L356.9 433.2Z" stroke-width="1.8"/>
<path d="M343.2 441.3 L346.4 441.3 L347 443.3 L344 444Z" stroke-width="1.8"/>
<path d="M373.5 434.2 L376.5 433.7 L376.7 436.5 L373.9 437Z" stroke-width="1.8"/>
<path d="M378.5 430.8 L381.8 430.6 L382.1 433.5 L378.9 433.7Z" stroke-width="1.8"/>
<path d="M420.6 380 L425.4 380 L425 383.8 L422.6 385.3 L420.2 382.4Z" stroke-width="1.8"/>
<path d="M362.2 422.7 L367 423.6 L368.4 420.7 L372.2 418.3 L377.5 419.8 L377.5 423.6 L373.7 424.6 L369.8 426 L372.2 430.8 L369.4 432.7 L366.5 431.8 L365 427.4 L362.7 425Z" stroke-width="1.8"/>
<path d="M349.8 420.9 L351.7 421.9 L350.7 423.8 L348.8 422.8Z" stroke-width="1.8"/>
<path d="M355.9 429.1 L359.4 431.4 L362.2 438.1 L360.3 439.1 L356.5 433.4Z" stroke-width="1.8"/>
</g>
<path transform="translate(446.3 406.6) scale(1)" d="M0 -7.6 C1.3 -5 4.900 -1.200 4.900 2.600 A4.900 4.700 0 0 1 -4.900 2.600 C-4.900 -1.200 -1.300 -5 0 -7.600Z" fill="#8f6fba" stroke="#3d1f80" stroke-width="1.8" stroke-linejoin="round"/>
<path transform="translate(569 527.3) scale(1)" d="M0 -7.6 C1.3 -5 4.900 -1.200 4.900 2.600 A4.900 4.700 0 0 1 -4.900 2.600 C-4.900 -1.200 -1.300 -5 0 -7.600Z" fill="#8f6fba" stroke="#3d1f80" stroke-width="1.8" stroke-linejoin="round"/>
<path transform="translate(227 535.5) scale(1)" d="M0 -7.6 C1.3 -5 4.900 -1.200 4.900 2.600 A4.900 4.700 0 0 1 -4.900 2.600 C-4.900 -1.200 -1.300 -5 0 -7.600Z" fill="#8f6fba" stroke="#3d1f80" stroke-width="1.8" stroke-linejoin="round"/>
<path transform="translate(309.8 544.4) scale(1)" d="M0 -7.6 C1.3 -5 4.900 -1.200 4.900 2.600 A4.900 4.700 0 0 1 -4.900 2.600 C-4.900 -1.200 -1.300 -5 0 -7.600Z" fill="#8f6fba" stroke="#3d1f80" stroke-width="1.8" stroke-linejoin="round"/>
<path transform="translate(313.4 546.2) scale(1)" d="M0 -7.6 C1.3 -5 4.900 -1.200 4.900 2.600 A4.900 4.700 0 0 1 -4.900 2.600 C-4.900 -1.200 -1.300 -5 0 -7.600Z" fill="#8f6fba" stroke="#3d1f80" stroke-width="1.8" stroke-linejoin="round"/>
    </svg>
    <div class="mbtn" style="top:12px;height:64px">
      <svg class="abs" style="left:8px;top:8px" width="16" height="16" viewBox="0 0 16 16"><circle cx="8" cy="8" r="7.7" fill="#1f222b"/><path d="M8 4.2v7.6M4.2 8h7.6" stroke="#fff" stroke-width="1.1" fill="none"/></svg>
      <svg class="abs" style="left:8px;top:40px" width="16" height="16" viewBox="0 0 16 16"><circle cx="8" cy="8" r="7.7" fill="#1f222b"/><path d="M4.2 8h7.6" stroke="#fff" stroke-width="1.1" fill="none"/></svg>
    </div>
    <div class="mbtn" style="top:84px;height:32px"><svg class="abs" style="left:8px;top:8px" width="16" height="16" viewBox="0 0 16 16"><circle cx="8" cy="8" r="5.6" fill="none" stroke="#343741" stroke-width="1"/><path d="M8 .5v3.2M8 12.3v3.2M.5 8h3.2M12.3 8h3.2" stroke="#343741" stroke-width="1" fill="none"/><circle cx="8" cy="8" r="1" fill="#343741"/></svg></div>
    <div class="mbtn" style="top:124px;height:32px"><svg class="abs" style="left:8px;top:8px" width="16" height="16" viewBox="0 0 16 16"><path d="M1.5 14.5L14.5 1.5M9.5 1.5h5v5M1.5 9.500v5h5" stroke="#343741" stroke-width=".95" fill="none"/></svg></div>
    <div class="mbtn" style="top:164px;height:32px"><svg class="abs" style="left:8px;top:8px" width="16" height="16" viewBox="0 0 16 16"><path d="M5.810 1.030L5.700 3.900 3.900 5.700 1.030 5.810A3.900 3.900 0 0 0 5.760 8.580L11.490 14.310A2 2 0 0 0 14.310 11.490L8.580 5.760A3.900 3.900 0 0 0 5.810 1.030Z" stroke="#343741" stroke-width="1" fill="none" stroke-linejoin="round"/><circle cx="12.600" cy="12.600" r=".8" fill="#343741"/></svg></div>
    <div id="layers">
      <div class="abs" style="left:16px;top:9px;font-size:12.2px;font-weight:bold;color:#1a1c21;line-height:16px;letter-spacing:-.25px">LAYERS</div>
      <svg class="abs" style="left:296px;top:10px" width="16" height="12" viewBox="0 0 16 12"><path d="M1 1.5h9M1 6h13.6M1 10.500h9M11.400 2.800L14.600 6l-3.200 3.200" stroke="#343741" stroke-width="1.1" fill="none"/></svg>
      <div class="row" style="top:32px"><svg class="abs" style="left:9px;top:9px" width="14" height="20" viewBox="-7 -10 14 20"><path d="M0 -8.6C1.500 -5.500 5.600 -1.400 5.600 3A5.600 5.600 0 0 1 -5.600 3C-5.600 -1.400 -1.500 -5.500 0 -8.600Z" fill="#9170b8" stroke="#5a3a8e" stroke-width="1"/></svg><span id="lt1" style="font-size:12.47px">PTAR en cuenca Katari</span>
        <svg class="abs" style="left:164px;top:15px" width="40" height="13" viewBox="0 0 40 13"><g fill="none" stroke="#69707d" stroke-width=".8"><circle cx="6.700" cy="6.500" r="5.500"/><path d="M3.700 4.700h6M4.900 6.700h3.600M6 8.700h1.400"/><circle cx="18.700" cy="6.500" r="4.700"/><path d="M18.700 3.500v3.200h2.800"/><rect x="26.700" y="2.300" width="8.600" height="8.600" rx="1.600"/></g></svg></div>
      <div class="row" style="top:73px"><svg class="abs" style="left:9px;top:12px" width="14" height="14" viewBox="0 0 14 14"><g fill="none" stroke="#343741" stroke-width="1"><rect x=".5" y=".5" width="3" height="3"/><rect x="5.500" y=".5" width="3" height="3"/><rect x="10.500" y=".5" width="3" height="3"/><rect x=".5" y="5.500" width="3" height="3"/><rect x="5.500" y="5.500" width="3" height="3"/><rect x="10.500" y="5.500" width="3" height="3"/><rect x=".5" y="10.500" width="3" height="3"/><rect x="5.500" y="10.500" width="3" height="3"/><rect x="10.500" y="10.500" width="3" height="3"/></g></svg><span style="font-size:12.65px">Cuenca Katari</span></div>
      <div class="row" style="top:114px"><svg class="abs" style="left:9px;top:12px" width="14" height="14" viewBox="0 0 14 14"><g fill="none" stroke="#343741" stroke-width="1"><rect x=".5" y=".5" width="3" height="3"/><rect x="5.500" y=".5" width="3" height="3"/><rect x="10.500" y=".5" width="3" height="3"/><rect x=".5" y="5.500" width="3" height="3"/><rect x="5.500" y="5.500" width="3" height="3"/><rect x="10.500" y="5.500" width="3" height="3"/><rect x=".5" y="10.500" width="3" height="3"/><rect x="5.500" y="10.500" width="3" height="3"/><rect x="10.500" y="10.500" width="3" height="3"/></g></svg><span style="font-size:12.3px">Road map</span></div>
      <div class="row" style="top:155px;height:1px"></div>
    </div>
    <div class="abs" id="zoomlbl" style="right:12px;top:559px;font-size:10.83px;color:#1a1c21;white-space:nowrap;line-height:14px"><b>zoom:</b> 8.28</div>
    <div class="abs" id="attrib" style="right:12px;top:585px;font-size:11.2px;color:#1a1c21;white-space:nowrap;line-height:14px"><span id="at1">Elastic Maps Service</span><svg width="10" height="10" viewBox="0 0 10 10" style="vertical-align:-1px;margin:0 1px 0 6px"><path d="M4 1.500H1.500v7h7V6M5.500 .800H9.200v3.700M9 1L4.500 5.500" stroke="#343741" stroke-width=".9" fill="none"/></svg><span>, </span><span id="at2">OpenMapTiles</span><svg width="10" height="10" viewBox="0 0 10 10" style="vertical-align:-1px;margin:0 1px 0 6px"><path d="M4 1.500H1.500v7h7V6M5.500 .800H9.200v3.700M9 1L4.500 5.500" stroke="#343741" stroke-width=".9" fill="none"/></svg><span>, </span><span id="at3">OpenStreetMap contributors</span><svg width="10" height="10" viewBox="0 0 10 10" style="vertical-align:-1px;margin:0 0 0 6px"><path d="M4 1.500H1.500v7h7V6M5.500 .800H9.200v3.700M9 1L4.500 5.500" stroke="#343741" stroke-width=".9" fill="none"/></svg></div>

  </div>
</div>

<!-- PANEL 3: chart -->
<div class="panel" style="left:955px;top:58.7px;width:940px;height:786px">
  <div class="ptitle" style="left:8px;top:5.3px">Grafico con datos PTAR - Katari</div>
  <svg class="abs" style="left:0;top:1.3px" width="930" height="775" viewBox="955 60 930 775">
    <g fill="none" stroke="#f0f2f6" stroke-width="1"><path d="M1047.500 88V765.500H1678"/></g>
    <g font-size="9.400" fill="#69707d" text-anchor="end"><text x="1037.200" y="767.9" textLength="5" lengthAdjust="spacingAndGlyphs">0</text><text x="1037.200" y="675.2" textLength="15" lengthAdjust="spacingAndGlyphs">200</text><text x="1037.200" y="582.5" textLength="15" lengthAdjust="spacingAndGlyphs">400</text><text x="1037.200" y="489.8" textLength="15" lengthAdjust="spacingAndGlyphs">600</text><text x="1037.200" y="397.1" textLength="15" lengthAdjust="spacingAndGlyphs">800</text><text x="1037.200" y="304.4" textLength="22.4" lengthAdjust="spacingAndGlyphs">1 000</text><text x="1037.200" y="211.7" textLength="22.4" lengthAdjust="spacingAndGlyphs">1 200</text><text x="1037.200" y="119.0" textLength="22.4" lengthAdjust="spacingAndGlyphs">1 400</text></g>
    <g font-size="9.400" fill="#69707d" text-anchor="middle"><text x="1049.8" y="783" textLength="47.200" lengthAdjust="spacingAndGlyphs">2008-01-01</text><text x="1134.0" y="783" textLength="47.200" lengthAdjust="spacingAndGlyphs">2010-01-01</text><text x="1218.2" y="783" textLength="47.200" lengthAdjust="spacingAndGlyphs">2012-01-01</text><text x="1302.4" y="783" textLength="47.200" lengthAdjust="spacingAndGlyphs">2014-01-01</text><text x="1386.6" y="783" textLength="47.200" lengthAdjust="spacingAndGlyphs">2016-01-01</text><text x="1470.8" y="783" textLength="47.200" lengthAdjust="spacingAndGlyphs">2018-01-01</text><text x="1555.0" y="783" textLength="47.200" lengthAdjust="spacingAndGlyphs">2020-01-01</text><text x="1639.2" y="783" textLength="47.200" lengthAdjust="spacingAndGlyphs">2022-01-01</text></g>
    <text x="1362.500" y="813" font-size="12.600" font-weight="bold" fill="#1a1c21" text-anchor="middle">Date</text>
    <text transform="translate(974.500 426) rotate(-90)" font-size="11.600" font-weight="bold" fill="#1a1c21" text-anchor="middle">Valor</text>
    <text transform="translate(994.700 425.700) rotate(-90)" font-size="9.800" font-weight="bold" fill="#1a1c21" text-anchor="middle" textLength="114.400" lengthAdjust="spacing">Conductividad, (µS/cm)</text>
    <g fill="#fff" stroke-width="2">
      <circle cx="1421" cy="88.200" r="2.900" stroke="#54b399"/>
      <circle cx="1424.700" cy="241" r="2.900" stroke="#d36086"/>
      <circle cx="1421" cy="366.300" r="2.900" stroke="#6092c0"/>
      <circle cx="1431.300" cy="380" r="2.900" stroke="#9170b8"/>
      <circle cx="1431.300" cy="403.300" r="2.900" stroke="#ca8eae"/>
    </g>
    <g>
      <circle cx="1715" cy="96" r="3.800" fill="#54b399"/><circle cx="1715" cy="118" r="3.800" fill="#6092c0"/><circle cx="1715" cy="140" r="3.800" fill="#d36086"/><circle cx="1715" cy="162" r="3.800" fill="#9170b8"/><circle cx="1715" cy="184" r="3.800" fill="#ca8eae"/>
    </g>
    <g font-size="12.300" fill="#343741"><text x="1727.100" y="100.3" textLength="146.3" lengthAdjust="spacingAndGlyphs">PLANTA DE TRATAMIEN...</text><text x="1727.100" y="122.3" textLength="77.6" lengthAdjust="spacingAndGlyphs">PTAR Batallas</text><text x="1727.100" y="144.3" textLength="125.7" lengthAdjust="spacingAndGlyphs">PTAR: DESAGUADERO</text><text x="1727.100" y="166.3" textLength="136.9" lengthAdjust="spacingAndGlyphs">PTAR Pueblo: JOCOPA...</text><text x="1727.100" y="188.3" textLength="146.3" lengthAdjust="spacingAndGlyphs">PTAR PUERTO: Zona ma...</text></g>
    <rect x="959" y="807" width="24" height="24" rx="3.500" fill="#f4f6fa"/>
    <g stroke="#4a4f5c" stroke-width=".9" fill="none"><path d="M964.800 814.400h2.100M968.900 814.400h8.100M964.800 817.500h2.100M968.900 817.500h8.100M964.800 820.600h2.100M968.900 820.600h8.100M964.800 823.700h2.100M968.900 823.700h8.100"/></g>
  </svg>

</div>
</body>
</html>
